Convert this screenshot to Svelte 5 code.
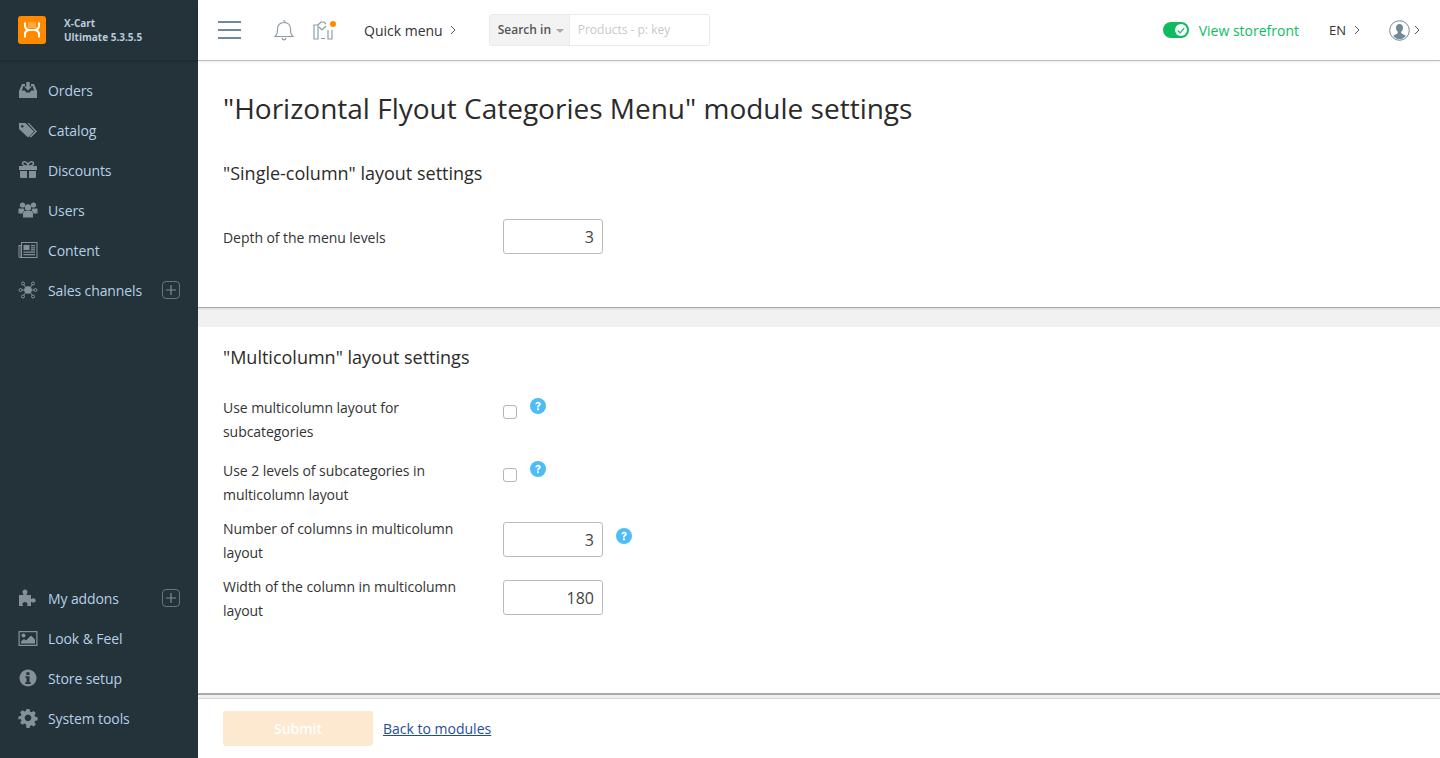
<script>
  const topNav = [
    { label: "Orders", icon: "orders" },
    { label: "Catalog", icon: "catalog" },
    { label: "Discounts", icon: "discounts" },
    { label: "Users", icon: "users" },
    { label: "Content", icon: "content" },
    { label: "Sales channels", icon: "sales", plus: true }
  ];
  const bottomNav = [
    { label: "My addons", icon: "addons", plus: true },
    { label: "Look & Feel", icon: "look" },
    { label: "Store setup", icon: "setup" },
    { label: "System tools", icon: "tools" }
  ];
</script>

{#snippet navIcon(name)}
  <svg class="nav-icon" width="20" height="20" viewBox="0 0 20 20" fill="#8b979e">
    {#if name === "orders"}
      <path d="M1 11 4 4h3v2H5.500L3.800 10.500H7l1 2h4l1-2h3.200L14.500 6H13V4h3l3 7v7H1z" />
      <path d="M8.300 2h3.400v4.500H14L10 10.500 6 6.500h2.300z" />
    {:else if name === "catalog"}
      <path d="M1 3h6.500L16 11.500 10 17.500 1 9z M4.300 5a1.300 1.300 0 1 0 .01 0z" fill-rule="evenodd" />
      <path d="M9.500 3h1.500L19 11.500 13 17.500l-1.500-1 5.500-5z" />
    {:else if name === "discounts"}
      <path d="M1 6h18v4H1zM2 11h7v7H3.500A1.500 1.500 0 0 1 2 16.500zM11 11h7v5.500A1.500 1.500 0 0 1 16.500 18H11z" />
      <path d="M9.500 6C7 6 4.500 5 4.500 3.200 4.500 1.500 7.500 1 9 3l1 2 1-2c1.500-2 4.500-1.500 4.500.2C15.500 5 13 6 10.500 6z" fill="none" stroke="#8b979e" stroke-width="1.600" />
    {:else if name === "users"}
      <circle cx="4.500" cy="5" r="2.600" />
      <circle cx="15.500" cy="5" r="2.600" />
      <circle cx="10" cy="7.500" r="3.200" />
      <path d="M0.500 8.500h5l1 1.500-2 3.500H.5zM19.500 8.500h-5l-1 1.500 2 3.500h4z" />
      <path d="M6.500 11h7l1.500 2v4.500H5V13z" />
    {:else if name === "content"}
      <path d="M3 2h16.500v16H2a1.500 1.500 0 0 1-1.500-1.500V5H3z M1.500 6v10.500a.5.500 0 0 0 1 0V6z M4 3v14h14.500V3z" fill-rule="evenodd" />
      <path d="M5.500 5h6v5h-6zM13 5h4v1.200h-4zM13 7.200h4v1.200h-4zM13 9.300h4v1.200h-4zM5.500 11.500H17v1.200H5.500zM5.500 14H17v1.200H5.500z" />
    {:else if name === "sales"}
      <circle cx="10" cy="10" r="3.800" />
      <g fill="none" stroke="#8b979e" stroke-width="1">
        <circle cx="2.500" cy="10" r="1.500" />
        <circle cx="17.500" cy="10" r="1.500" />
        <circle cx="5" cy="3.500" r="1.500" />
        <circle cx="15" cy="3.500" r="1.500" />
        <circle cx="5" cy="16.500" r="1.500" />
        <circle cx="15" cy="16.500" r="1.500" />
        <path d="M4 10h3M13 10h3M5.800 4.800 8 8M14.200 4.800 12 8M5.800 15.200 8 12M14.200 15.200 12 12" />
      </g>
    {:else if name === "addons"}
      <path d="M1 7h4.500C5 5.500 4.500 5 4.500 3.800 4.500 2.500 5.500 1.500 7 1.500s2.500 1 2.500 2.300C9.500 5 9 5.500 8.500 7H13v4c1-.6 1.500-.8 2.300-.8 1.400 0 2.400.9 2.400 2.200s-1 2.200-2.400 2.200c-.8 0-1.300-.3-2.300-.8v4.200H9c.3-1 .5-1.500.5-2 0-1-1-2-2.500-2s-2.500 1-2.500 2c0 .5.200 1 .5 2H1z" />
    {:else if name === "look"}
      <path d="M.5 3h19v15H.5z M1.700 4.200v12.600h16.600V4.200z" fill-rule="evenodd" />
      <circle cx="5.500" cy="7.500" r="2" />
      <path d="M3 15.500v-2l3-2.500 2 1.500 5-5 4 4v4z" />
    {:else if name === "setup"}
      <path d="M10 1.500a8.500 8.500 0 1 0 .01 0z M8.300 4.200h3.200v2.700H8.300z M7.500 8.300h4v6h1.200v1.700H7.300v-1.700h1.200v-4.300h-1z" fill-rule="evenodd" />
    {:else if name === "tools"}
      <path d="M8.500 1.500h3l.5 2.400 1.600.7 2.100-1.300 2.100 2.100-1.300 2.100.7 1.600 2.400.5v3l-2.400.5-.7 1.600 1.300 2.100-2.100 2.100-2.100-1.300-1.600.7-.5 2.400h-3L8 16.600l-1.600-.7-2.100 1.300-2.100-2.100 1.300-2.100-.7-1.600L.4 11.900v-3l2.400-.5.700-1.600-1.300-2.100 2.100-2.100 2.100 1.300L8 3.200z M10 7a3.300 3.300 0 1 0 .01 0z" fill-rule="evenodd" transform="translate(0 -.4)" />
    {/if}
  </svg>
{/snippet}

{#snippet navRow(item)}
  <li class="nav-row">
    {@render navIcon(item.icon)}
    <span class="nav-label">{item.label}</span>
    {#if item.plus}
      <span class="plus">
        <svg width="10" height="10" viewBox="0 0 10 10" stroke="#7d8a91" stroke-width="1.200"><path d="M5 0v10M0 5h10" /></svg>
      </span>
    {/if}
  </li>
{/snippet}

{#snippet help()}
  <svg class="help" width="16" height="16" viewBox="0 0 16 16">
    <circle cx="8" cy="8" r="8" fill="#4dbdf7" />
    <path d="M5.300 6.200C5.500 4.600 6.600 3.700 8.100 3.700c1.600 0 2.700 1 2.700 2.300 0 1.100-.6 1.600-1.300 2.100-.6.400-.8.700-.8 1.300H7c0-1.100.3-1.700 1-2.200.6-.4.900-.7.900-1.100 0-.5-.3-.8-.8-.8-.6 0-.9.400-1 1z" fill="#fff" />
    <rect x="7" y="10.300" width="1.900" height="1.900" fill="#fff" />
  </svg>
{/snippet}

<div class="layout">
  <aside class="sidebar">
    <div class="brand">
      <div class="logo">
        <svg width="28" height="28" viewBox="0 0 28 28">
          <rect width="28" height="28" rx="3" fill="#ff8a00" />
          <path d="M7 6.500v3.500c0 2.500 2 3.500 4 4-2 .5-4 1.500-4 4v3.500M21 6.500v3.500c0 2.500-2 3.500-4 4 2 .5 4 1.500 4 4v3.500M11 14h6" fill="none" stroke="#fff" stroke-width="2" />
          <path d="M10.500 7h7M10.500 9h7M10.500 11h7" stroke="#fff" stroke-width="1" stroke-dasharray="1 1" />
        </svg>
      </div>
      <div class="brand-text">X-Cart<br />Ultimate 5.3.5.5</div>
    </div>
    <ul class="nav">
      {#each topNav as item}
        {@render navRow(item)}
      {/each}
    </ul>
    <ul class="nav nav-bottom">
      {#each bottomNav as item}
        {@render navRow(item)}
      {/each}
    </ul>
  </aside>

  <div class="main">
    <header class="topbar">
      <svg class="burger" width="23" height="18" viewBox="0 0 23 18" fill="#6f8a96">
        <rect y="0" width="23" height="2" /><rect y="8" width="23" height="2" /><rect y="16" width="23" height="2" />
      </svg>
      <svg class="bell" width="20" height="22" viewBox="0 0 20 22" fill="none" stroke="#8a9ea8" stroke-width="1.200">
        <path d="M1 17.500c2-1.500 2.500-3.500 2.500-7C3.500 6 6 3.500 10 3.500s6.500 2.500 6.500 7c0 3.500.5 5.500 2.500 7z" />
        <path d="M8 19c.3 1.200 1 1.800 2 1.800s1.700-.6 2-1.800M9.500 1l2 2.500" />
      </svg>
      <span class="tour">
        <svg width="22" height="20" viewBox="0 0 22 20" fill="none" stroke="#8a9ea8" stroke-width="1.200">
          <path d="M1 5h4v14H1zM5 5l3-3M8 2h3l2 2M6 7l3 3 4-4M8 18.500h4M15 10v9h4v-9" />
        </svg>
        <i class="dot"></i>
      </span>
      <span class="quick">Quick menu</span>
      {@render chevron()}
      <div class="search">
        <div class="search-in">Search in <i class="caret"></i></div>
        <div class="search-input">Products - p: key</div>
      </div>

      <div class="top-right">
        <span class="toggle">
          <span class="knob">
            <svg width="10" height="8" viewBox="0 0 10 8" fill="none" stroke="#0ebc5f" stroke-width="1.500"><path d="M1 4l3 3 5-6" /></svg>
          </span>
        </span>
        <span class="storefront">View storefront</span>
        <span class="lang">EN</span>
        {@render chevron()}
        <svg class="avatar" width="21" height="21" viewBox="0 0 21 21">
          <circle cx="10.500" cy="10.500" r="9.800" fill="#fff" stroke="#6f8a96" />
          <path d="M10.500 4c2.200 0 3.500 1.600 3.500 3.800 0 1.700-.8 3.200-1.700 4v1.400l4.500 2.500c-1.500 2.200-3.800 3.600-6.300 3.600s-4.800-1.400-6.300-3.600l4.500-2.500v-1.400c-.9-.8-1.700-2.300-1.700-4C7 5.600 8.300 4 10.500 4z" fill="#6f8a96" />
        </svg>
        {@render chevron()}
      </div>
    </header>

    <main class="content">
      <section class="panel first">
        <h1>"Horizontal Flyout Categories Menu" module settings</h1>
        <h2>"Single-column" layout settings</h2>
        <div class="field single">
          <label for="depth">Depth of the menu levels</label>
          <input id="depth" class="num" type="text" value="3" />
        </div>
      </section>

      <section class="panel second">
        <h2>"Multicolumn" layout settings</h2>
        <div class="field check one">
          <label for="use-multi">Use multicolumn layout for subcategories</label>
          <input id="use-multi" type="checkbox" />
          {@render help()}
        </div>
        <div class="field check two">
          <label for="use-two">Use 2 levels of subcategories in multicolumn layout</label>
          <input id="use-two" type="checkbox" />
          {@render help()}
        </div>
        <div class="field three">
          <label for="cols">Number of columns in multicolumn layout</label>
          <input id="cols" class="num" type="text" value="3" />
          {@render help()}
        </div>
        <div class="field four">
          <label for="width">Width of the column in multicolumn layout</label>
          <input id="width" class="num" type="text" value="180" />
        </div>
      </section>
    </main>

    <footer class="actions">
      <button class="submit" disabled>Submit</button>
      <a href="#back" class="back">Back to modules</a>
    </footer>
  </div>
</div>

{#snippet chevron()}
  <svg class="chev" width="6" height="10" viewBox="0 0 6 10" fill="none" stroke="#555" stroke-width="1"><path d="M1 1l4 4-4 4" /></svg>
{/snippet}

<style>
  :global(body) {
    margin: 0;
    background: #fff;
    font-family: "Open Sans", sans-serif;
  }

  .layout {
    display: flex;
    height: 758px;
    overflow: hidden;
  }

  .sidebar {
    width: 198px;
    flex: none;
    display: flex;
    flex-direction: column;
    background: #24323a;
    color: #b5d1e6;
  }

  .brand {
    height: 60px;
    display: flex;
    align-items: center;
    padding-left: 18px;
    box-shadow: 0 1px 3px rgba(0, 0, 0, 0.25);
    box-sizing: border-box;
  }

  .logo {
    display: flex;
    margin-right: 18px;
  }

  .brand-text {
    font-size: 10px;
    font-weight: 700;
    line-height: 14px;
    color: #b8cbd8;
  }

  .nav {
    list-style: none;
    margin: 0;
    padding: 10px 0 0;
  }

  .nav-bottom {
    margin-top: auto;
    padding: 0 0 20px;
  }

  .nav-row {
    height: 40px;
    display: flex;
    align-items: center;
    padding: 0 18px;
    font-size: 14px;
  }

  .nav-icon {
    flex: none;
    margin-right: 10px;
    opacity: 0.95;
  }

  .nav-label {
    flex: 1;
    letter-spacing: -0.1px;
  }

  .plus {
    width: 16px;
    height: 16px;
    border: 1px solid #67747b;
    border-radius: 4px;
    display: flex;
    align-items: center;
    justify-content: center;
  }

  .main {
    flex: 1;
    min-width: 0;
    display: flex;
    flex-direction: column;
    background: #f1f1f1;
  }

  .topbar {
    height: 60px;
    flex: none;
    display: flex;
    align-items: center;
    padding-left: 20px;
    background: #fff;
    border-bottom: 1px solid #bbb;
    box-sizing: content-box;
    box-shadow: 0 1px 3px rgba(0, 0, 0, 0.08);
    position: relative;
    z-index: 1;
    color: #333;
  }

  .burger {
    margin-right: 33px;
  }

  .bell {
    margin-right: 19px;
  }

  .tour {
    position: relative;
    display: flex;
    margin-right: 29px;
  }

  .dot {
    position: absolute;
    top: 1px;
    right: -1px;
    width: 6px;
    height: 6px;
    border-radius: 50%;
    background: #ff8a00;
  }

  .quick {
    font-size: 14px;
    margin-right: 7px;
  }

  .search {
    margin-left: 33px;
    width: 221px;
    height: 32px;
    box-sizing: border-box;
    display: flex;
    border: 1px solid #eaeaea;
    border-radius: 3px;
    font-size: 12px;
  }

  .search-in {
    width: 80px;
    flex: none;
    box-sizing: border-box;
    padding-left: 8px;
    line-height: 30px;
    font-weight: 600;
    color: #555;
    background: #f3f3f3;
    border-right: 1px solid #eaeaea;
    white-space: nowrap;
  }

  .caret {
    display: inline-block;
    margin-left: 2px;
    vertical-align: 1px;
    border: 4px solid transparent;
    border-top-color: #aaa;
    border-bottom: 0;
  }

  .search-input {
    padding-left: 8px;
    line-height: 30px;
    color: #c9c9c9;
  }

  .top-right {
    margin-left: auto;
    display: flex;
    align-items: center;
    padding-right: 20px;
  }

  .toggle {
    width: 26px;
    height: 16px;
    padding: 2px;
    box-sizing: border-box;
    border-radius: 8px;
    background: #0ebc5f;
    display: flex;
    justify-content: flex-end;
    margin-right: 10px;
  }

  .knob {
    width: 12px;
    height: 12px;
    border-radius: 50%;
    background: #fff;
    display: flex;
    align-items: center;
    justify-content: center;
  }

  .knob svg {
    width: 8px;
    height: 7px;
  }

  .storefront {
    font-size: 14px;
    color: #0ebc5f;
    margin-right: 30px;
  }

  .lang {
    font-size: 13px;
    margin-right: 8px;
  }

  .avatar {
    margin: 0 4px 0 29px;
  }

  .content {
    flex: 1;
    display: flex;
    flex-direction: column;
    overflow: hidden;
  }

  .panel {
    background: #fff;
    padding: 0 25px;
    box-sizing: border-box;
  }

  .first {
    height: 247px;
    flex: none;
    border-bottom: 1px solid #aaa;
    box-shadow: 0 1px 2px rgba(0, 0, 0, 0.1);
    margin-bottom: 19px;
  }

  .second {
    flex: 1;
    border-bottom: 2px solid #aaa;
  }

  h1 {
    margin: 0;
    padding-top: 27px;
    font-size: 28px;
    line-height: 40px;
    font-weight: 400;
    color: #2b2b2b;
  }

  h2 {
    margin: 0;
    font-size: 18px;
    line-height: 24px;
    font-weight: 400;
    color: #2b2b2b;
  }

  .first h2 {
    margin-top: 33px;
  }

  .second h2 {
    padding-top: 18px;
  }

  .field {
    display: flex;
    align-items: flex-start;
  }

  .field label {
    width: 250px;
    margin-right: 30px;
    font-size: 14px;
    line-height: 24px;
    color: #333;
    letter-spacing: -0.05px;
  }

  .single {
    margin-top: 34px;
  }

  .single label {
    margin-top: 7px;
  }

  .num {
    width: 100px;
    height: 35px;
    box-sizing: border-box;
    border: 1px solid #bbb;
    border-radius: 3px;
    text-align: right;
    padding: 0 8px;
    font: 16px "Open Sans", sans-serif;
    color: #444;
    outline: none;
  }

  .check input {
    appearance: none;
    width: 14px;
    height: 14px;
    margin: 9px 0 0;
    border: 1px solid #b5b5b5;
    border-radius: 3px;
    background: #fff;
  }

  .one {
    margin-top: 27px;
  }

  .two {
    margin-top: 15px;
  }

  .three {
    margin-top: 15px;
  }

  .four {
    margin-top: 15px;
  }

  .three label,
  .four label {
    margin-top: -5px;
  }

  .help {
    flex: none;
    margin-left: 13px;
    margin-top: 2px;
  }

  .three .help {
    margin-top: 6px;
  }

  .actions {
    height: 60px;
    flex: none;
    display: flex;
    align-items: center;
    padding-left: 25px;
    box-sizing: border-box;
    background: #fff;
    border-top: 1px solid #d6d6d6;
    margin-top: 3px;
  }

  .submit {
    width: 150px;
    height: 35px;
    border: 0;
    border-radius: 3px;
    background: #fde9d0;
    color: #fff;
    font: 600 14px "Open Sans", sans-serif;
    margin-right: 10px;
  }

  .back {
    font-size: 14px;
    color: #1f4c9e;
  }
</style>
